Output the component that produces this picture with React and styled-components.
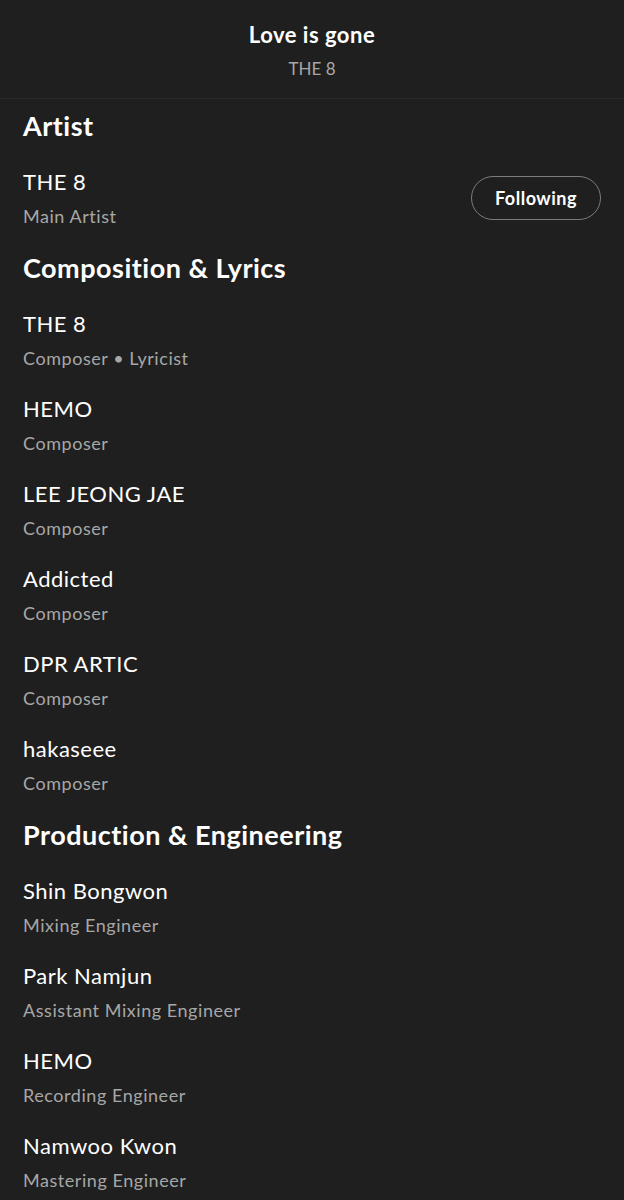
import React from 'react'
import styled, { createGlobalStyle } from 'styled-components'

const GlobalStyle = createGlobalStyle`
    html, body {
        margin: 0;
        padding: 0;
        background: #1f1f1f;
    }
    body {
        font-family: Lato, "Open Sans", sans-serif;
        color: #ffffff;
    }
`

const Page = styled.div`
    width: 624px;
    min-height: 1200px;
    background: #1f1f1f;
`

const Header = styled.header`
    display: flex;
    flex-direction: column;
    align-items: center;
    padding: 21px 0 17px;
    border-bottom: 1px solid #2b2b2b;
`

const Title = styled.h1`
    margin: 0;
    font-size: 22px;
    line-height: 28px;
    font-weight: 700;
    letter-spacing: 0.5px;
`

const Subtitle = styled.div`
    margin-top: 8px;
    font-size: 17px;
    line-height: 24px;
    color: #a7a7a7;
`

const Content = styled.div`
    padding: 9px 23px 0;
`

const Section = styled.section`
    display: flex;
    flex-direction: column;
    margin-bottom: 22px;
`

const Heading = styled.h2`
    margin: 0 0 24px;
    font-size: 27px;
    line-height: 36px;
    font-weight: 700;
    letter-spacing: 0.5px;
`

const List = styled.div`
    display: flex;
    flex-direction: column;
    gap: 25px;
`

const Row = styled.div`
    display: flex;
    align-items: center;
    justify-content: space-between;
`

const Info = styled.div`
    display: flex;
    flex-direction: column;
`

const Name = styled.div`
    font-size: 22px;
    line-height: 28px;
    letter-spacing: 0.5px;
`

const Role = styled.div`
    margin-top: 8px;
    font-size: 18px;
    line-height: 24px;
    letter-spacing: 0.55px;
    color: #a7a7a7;
`

const FollowButton = styled.button`
    height: 44px;
    padding: 0 23px;
    border-radius: 22px;
    border: 1px solid #7c7c7c;
    background: transparent;
    color: #ffffff;
    font-family: inherit;
    font-size: 18px;
    font-weight: 700;
    letter-spacing: 0.5px;
    cursor: pointer;
`

const credits = [
    {
        title: 'Artist',
        people: [{ name: 'THE 8', role: 'Main Artist', follow: true }]
    },
    {
        title: 'Composition & Lyrics',
        people: [
            { name: 'THE 8', role: 'Composer • Lyricist' },
            { name: 'HEMO', role: 'Composer' },
            { name: 'LEE JEONG JAE', role: 'Composer' },
            { name: 'Addicted', role: 'Composer' },
            { name: 'DPR ARTIC', role: 'Composer' },
            { name: 'hakaseee', role: 'Composer' }
        ]
    },
    {
        title: 'Production & Engineering',
        people: [
            { name: 'Shin Bongwon', role: 'Mixing Engineer' },
            { name: 'Park Namjun', role: 'Assistant Mixing Engineer' },
            { name: 'HEMO', role: 'Recording Engineer' },
            { name: 'Namwoo Kwon', role: 'Mastering Engineer' }
        ]
    }
]

export default function App() {
    return (
        <Page>
            <GlobalStyle />
            <Header>
                <Title>Love is gone</Title>
                <Subtitle>THE 8</Subtitle>
            </Header>
            <Content>
                {credits.map(section => (
                    <Section key={section.title}>
                        <Heading>{section.title}</Heading>
                        <List>
                            {section.people.map((p, i) => (
                                <Row key={i}>
                                    <Info>
                                        <Name>{p.name}</Name>
                                        <Role>{p.role}</Role>
                                    </Info>
                                    {p.follow && <FollowButton>Following</FollowButton>}
                                </Row>
                            ))}
                        </List>
                    </Section>
                ))}
            </Content>
        </Page>
    )
}
